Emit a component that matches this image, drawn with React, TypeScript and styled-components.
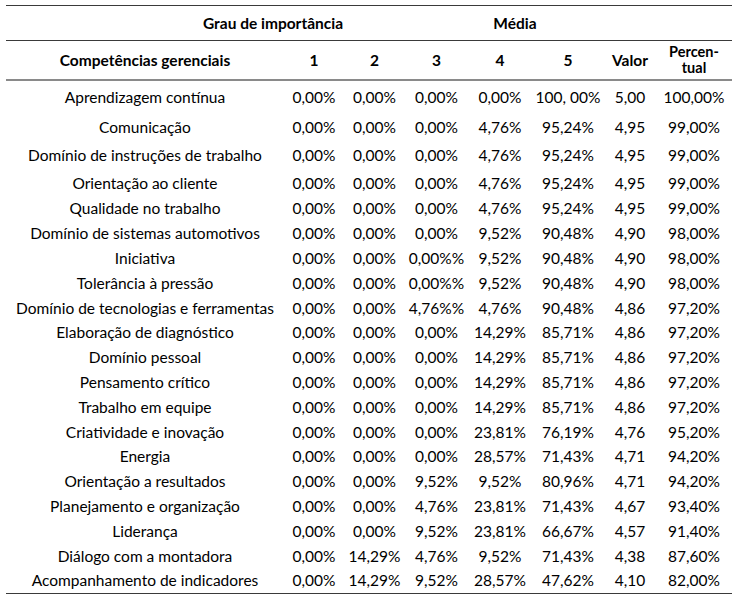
import styled, { createGlobalStyle } from 'styled-components';

const GlobalStyle = createGlobalStyle`
  html, body {
    margin: 0;
    padding: 0;
    background: #ffffff;
    overflow: hidden;
  }
  body {
    font-family: Lato, "Liberation Sans", sans-serif;
    color: #000000;
  }
`;

const COLUMNS = '278px 60px 61px 63px 64px 72px 52px 76px';

const Page = styled.div`
  padding: 5px 0 0 6px;
  width: 726px;
`;

const Table = styled.div`
  display: flex;
  flex-direction: column;
  border-top: 1px solid #3a3a3a;
  border-bottom: 1px solid #3a3a3a;
`;

const TopHeader = styled.div`
  display: grid;
  grid-template-columns: 132px 270px 214px 1fr;
  height: 34px;
  align-items: center;
  border-bottom: 1px solid #3a3a3a;
  font-size: 15.5px;
  font-weight: 700;
  text-align: center;
`;

const ColumnHeader = styled.div`
  display: grid;
  grid-template-columns: ${COLUMNS};
  height: 38px;
  align-items: center;
  border-bottom: 2px solid #8a8a8a;
  font-size: 15.5px;
  font-weight: 700;
  text-align: center;
`;

const StackedLabel = styled.div`
  font-size: 14.5px;
  line-height: 16px;
`;

const Row = styled.div<{ $h: number }>`
  display: grid;
  grid-template-columns: ${COLUMNS};
  height: ${(p) => p.$h}px;
  align-items: center;
  font-size: 15.5px;
  text-align: center;
  white-space: nowrap;
`;

const Footnote = styled.div`
  padding-top: 3px;
  font-size: 14px;
`;

type Line = [string, string, string, string, string, string, string, string];

const rows: Line[] = [
  ['Aprendizagem contínua', '0,00%', '0,00%', '0,00%', '0,00%', '100, 00%', '5,00', '100,00%'],
  ['Comunicação', '0,00%', '0,00%', '0,00%', '4,76%', '95,24%', '4,95', '99,00%'],
  ['Domínio de instruções de trabalho', '0,00%', '0,00%', '0,00%', '4,76%', '95,24%', '4,95', '99,00%'],
  ['Orientação ao cliente', '0,00%', '0,00%', '0,00%', '4,76%', '95,24%', '4,95', '99,00%'],
  ['Qualidade no trabalho', '0,00%', '0,00%', '0,00%', '4,76%', '95,24%', '4,95', '99,00%'],
  ['Domínio de sistemas automotivos', '0,00%', '0,00%', '0,00%', '9,52%', '90,48%', '4,90', '98,00%'],
  ['Iniciativa', '0,00%', '0,00%', '0,00%%', '9,52%', '90,48%', '4,90', '98,00%'],
  ['Tolerância à pressão', '0,00%', '0,00%', '0,00%%', '9,52%', '90,48%', '4,90', '98,00%'],
  ['Domínio de tecnologias e ferramentas', '0,00%', '0,00%', '4,76%%', '4,76%', '90,48%', '4,86', '97,20%'],
  ['Elaboração de diagnóstico', '0,00%', '0,00%', '0,00%', '14,29%', '85,71%', '4,86', '97,20%'],
  ['Domínio pessoal', '0,00%', '0,00%', '0,00%', '14,29%', '85,71%', '4,86', '97,20%'],
  ['Pensamento crítico', '0,00%', '0,00%', '0,00%', '14,29%', '85,71%', '4,86', '97,20%'],
  ['Trabalho em equipe', '0,00%', '0,00%', '0,00%', '14,29%', '85,71%', '4,86', '97,20%'],
  ['Criatividade e inovação', '0,00%', '0,00%', '0,00%', '23,81%', '76,19%', '4,76', '95,20%'],
  ['Energia', '0,00%', '0,00%', '0,00%', '28,57%', '71,43%', '4,71', '94,20%'],
  ['Orientação a resultados', '0,00%', '0,00%', '9,52%', '9,52%', '80,96%', '4,71', '94,20%'],
  ['Planejamento e organização', '0,00%', '0,00%', '4,76%', '23,81%', '71,43%', '4,67', '93,40%'],
  ['Liderança', '0,00%', '0,00%', '9,52%', '23,81%', '66,67%', '4,57', '91,40%'],
  ['Diálogo com a montadora', '0,00%', '14,29%', '4,76%', '9,52%', '71,43%', '4,38', '87,60%'],
  ['Acompanhamento de indicadores', '0,00%', '14,29%', '9,52%', '28,57%', '47,62%', '4,10', '82,00%'],
];

// first rows in the source are a bit taller than the rest
const rowHeight = (i: number) => [32, 27, 29, 27][i] ?? 24.8;

export const App = () => {
  return (
    <Page>
      <GlobalStyle />
      <Table>
        <TopHeader>
          <div />
          <div>Grau de importância</div>
          <div>Média</div>
          <div />
        </TopHeader>
        <ColumnHeader>
          <div>Competências gerenciais</div>
          <div>1</div>
          <div>2</div>
          <div>3</div>
          <div>4</div>
          <div>5</div>
          <div>Valor</div>
          <StackedLabel>
            Percen-
            <br />
            tual
          </StackedLabel>
        </ColumnHeader>
        {rows.map((row, i) => (
          <Row key={row[0]} $h={rowHeight(i)}>
            {row.map((cell, j) => (
              <div key={j}>{cell}</div>
            ))}
          </Row>
        ))}
      </Table>
      <Footnote>Fonte: elaborado pelos autores com base nos dados da pesquisa.</Footnote>
    </Page>
  );
};

export default App;
